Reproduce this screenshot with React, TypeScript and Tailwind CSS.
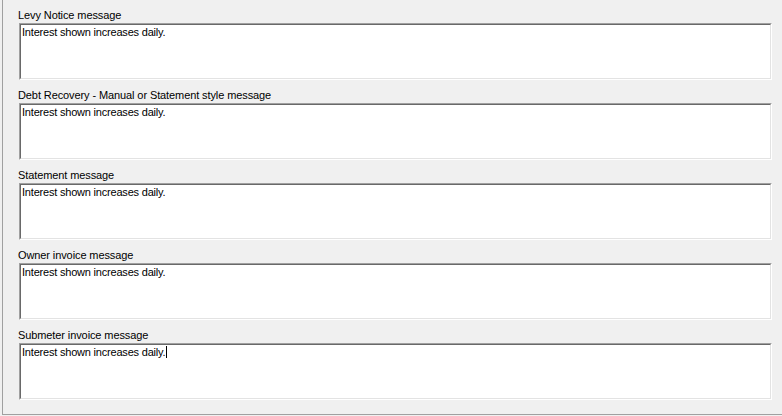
import { FC } from 'react';

const messages = [
  { label: 'Levy Notice message', value: 'Interest shown increases daily.' },
  { label: 'Debt Recovery - Manual or Statement style message', value: 'Interest shown increases daily.' },
  { label: 'Statement message', value: 'Interest shown increases daily.' },
  { label: 'Owner invoice message', value: 'Interest shown increases daily.' },
  { label: 'Submeter invoice message', value: 'Interest shown increases daily.', focused: true },
];

// sunken win32 style edit box
const MessageBox: FC<{ value: string; focused?: boolean }> = ({ value, focused }) => (
  <div className="ml-[16px] w-[753px] h-[57px] border border-t-[#a0a0a0] border-l-[#a0a0a0] border-b-white border-r-white">
    <div className="h-full bg-white border border-t-[#696969] border-l-[#696969] border-b-[#e3e3e3] border-r-[#e3e3e3] pl-[1px] leading-[14px] tracking-[-0.2px] text-black">
      {value}
      {focused && <span className="inline-block w-px h-[12px] bg-black align-[-2px] ml-[1px]"></span>}
    </div>
  </div>
);

const App: FC = () => {
  return (
    <div
      className="w-[782px] h-[416px] bg-[#f0f0f0] text-[11px] text-black overflow-hidden"
      style={{ fontFamily: '"Liberation Sans", Arial, sans-serif' }}
    >
      <div className="ml-[2px] h-[415px] border-l border-b border-[#a0a0a0]">
        <div className="h-full flex flex-col gap-[8px] pt-[8px]">
          {messages.map((m) => (
            <div key={m.label} className="flex flex-col gap-[1px]">
              <div className="pl-[15px] leading-[14px] tracking-[-0.1px]">{m.label}</div>
              <MessageBox value={m.value} focused={m.focused} />
            </div>
          ))}
        </div>
      </div>
    </div>
  );
};

export default App;
